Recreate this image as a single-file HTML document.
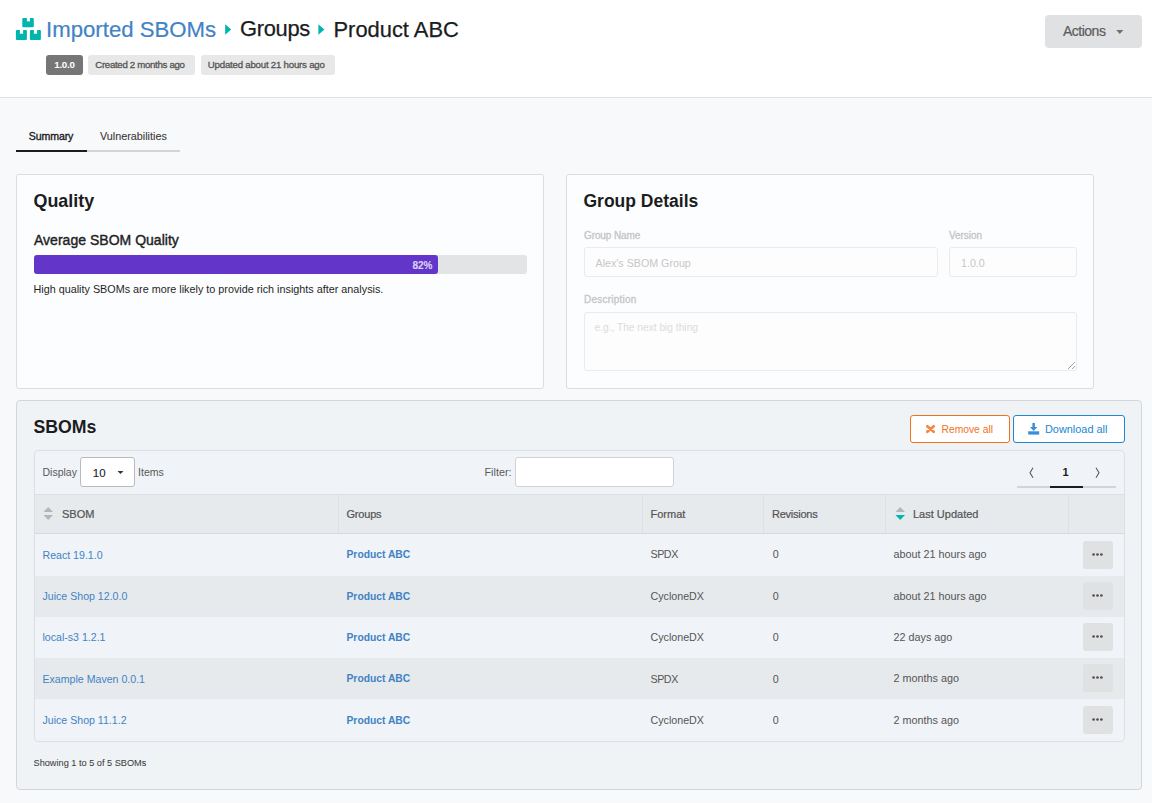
<!DOCTYPE html>
<html><head><meta charset="utf-8"><title>Product ABC</title>
<style>
html,body{margin:0;padding:0;width:1152px;height:803px;overflow:hidden;background:#f8f9fb;}
body{position:relative;font-family:"Liberation Sans", sans-serif;}
.a{position:absolute;}
.t{white-space:nowrap;}
</style></head><body>
<div class="a" style="left:0px;top:0px;width:1152px;height:97px;background:#ffffff;"></div>
<div class="a" style="left:0px;top:97px;width:1152px;height:1px;background:#dfe3e8;"></div>
<svg class="a" style="left:0;top:0" width="60" height="50" viewBox="0 0 60 50">
<g fill="#00b5ad">
<path d="M23.7 18h3.2v3.6l1.55-0.4 1.55 0.4V18h2.9q0.9 0 0.9 1v7.2q0 1-1 1h-9.5q-1 0-1-1V19q0-1 1-1z"/>
<path d="M16.9 30h3v4l1.6-0.5 1.6 0.5v-4h2.9q0.9 0 0.9 1v8q0 1-1 1h-9q-1 0-1-1v-8q0-1 1-1z"/>
<path d="M30.9 30h3v4l1.6-0.5 1.6 0.5v-4h2.9q0.9 0 0.9 1v8q0 1-1 1h-9q-1 0-1-1v-8q0-1 1-1z"/>
</g></svg>
<div class="a t" style="left:46px;top:18.70px;font-size:22.2px;line-height:22.2px;font-weight:400;color:#4183c4;-webkit-text-stroke:0.2px #4183c4;">Imported SBOMs</div>
<svg class="a" style="left:224px;top:23px" width="10" height="13"><path d="M1.2 1.3L7.2 6.5L1.2 11.7Z" fill="#00b5ad"/></svg>
<div class="a t" style="left:240px;top:18.15px;font-size:21.9px;line-height:21.9px;font-weight:400;color:#1b1c1d;letter-spacing:-0.3px;-webkit-text-stroke:0.25px #1b1c1d;">Groups</div>
<svg class="a" style="left:317px;top:23px" width="10" height="13"><path d="M1.4 1.3L7.4 6.5L1.4 11.7Z" fill="#00b5ad"/></svg>
<div class="a t" style="left:333.5px;top:18.85px;font-size:21.9px;line-height:21.9px;font-weight:400;color:#1b1c1d;-webkit-text-stroke:0.25px #1b1c1d;">Product ABC</div>
<div class="a" style="left:46px;top:55px;width:37px;height:20px;background:#767676;border-radius:3px;"></div>
<div class="a t" style="left:54.3px;top:59.60px;font-size:9.8px;line-height:9.8px;font-weight:700;color:#ffffff;letter-spacing:-0.3px;">1.0.0</div>
<div class="a" style="left:88px;top:55px;width:106.5px;height:20px;background:#e8e8e8;border-radius:3px;"></div>
<div class="a t" style="left:95.3px;top:59.95px;font-size:9.7px;line-height:9.7px;font-weight:400;color:#555;letter-spacing:-0.33px;-webkit-text-stroke:0.3px #555;">Created 2 months ago</div>
<div class="a" style="left:200.5px;top:55px;width:134.0px;height:20px;background:#e8e8e8;border-radius:3px;"></div>
<div class="a t" style="left:207.8px;top:59.95px;font-size:9.7px;line-height:9.7px;font-weight:400;color:#555;letter-spacing:-0.23px;-webkit-text-stroke:0.3px #555;">Updated about 21 hours ago</div>
<div class="a" style="left:1045px;top:15px;width:97px;height:33px;background:#e0e1e2;border-radius:4px;"></div>
<div class="a t" style="left:1063px;top:24.00px;font-size:14px;line-height:14px;font-weight:400;color:#5b5b5b;letter-spacing:-0.5px;-webkit-text-stroke:0.2px #5b5b5b;">Actions</div>
<svg class="a" style="left:1115px;top:29px" width="10" height="7"><path d="M1.3 1L8.3 1L4.8 5Z" fill="#6e6e6e"/></svg>
<div class="a" style="left:0px;top:98px;width:1152px;height:705px;background:#f8f9fb;"></div>
<div class="a t" style="left:28.7px;top:131.20px;font-size:10.6px;line-height:10.6px;font-weight:400;color:#1b1c1d;letter-spacing:-0.1px;-webkit-text-stroke:0.35px #1b1c1d;">Summary</div>
<div class="a t" style="left:100px;top:130.60px;font-size:10.8px;line-height:10.8px;font-weight:400;color:#3a3a3a;-webkit-text-stroke:0.1px #3a3a3a;">Vulnerabilities</div>
<div class="a" style="left:16px;top:150px;width:71px;height:2px;background:#1b1c1d;"></div>
<div class="a" style="left:87px;top:150px;width:93px;height:2px;background:#d4d4d5;"></div>
<div class="a" style="left:16px;top:174px;width:528px;height:215px;background:#fcfdfe;box-sizing:border-box;border:1px solid #dcdde0;border-radius:3px;"></div>
<div class="a t" style="left:33.5px;top:192.65px;font-size:17.9px;line-height:17.9px;font-weight:700;color:#1b1c1d;">Quality</div>
<div class="a t" style="left:34px;top:232.50px;font-size:14px;line-height:14px;font-weight:400;color:#222;letter-spacing:0.02px;-webkit-text-stroke:0.4px #222;">Average SBOM Quality</div>
<div class="a" style="left:34px;top:255px;width:493px;height:19px;background:#e3e4e6;border-radius:3px;"></div>
<div class="a" style="left:34px;top:255px;width:404px;height:19px;background:#6435c9;border-radius:3px;"></div>
<div class="a t" style="left:412.5px;top:261.00px;font-size:10px;line-height:10px;font-weight:700;color:#d9cff3;-webkit-text-stroke:0.15px #d9cff3;">82%</div>
<div class="a t" style="left:33.5px;top:284.00px;font-size:10.8px;line-height:10.8px;font-weight:400;color:#1f1f1f;">High quality SBOMs are more likely to provide rich insights after analysis.</div>
<div class="a" style="left:566px;top:174px;width:528px;height:215px;background:#fcfdfe;box-sizing:border-box;border:1px solid #dcdde0;border-radius:3px;"></div>
<div class="a t" style="left:583.5px;top:192.85px;font-size:17.5px;line-height:17.5px;font-weight:700;color:#1b1c1d;">Group Details</div>
<div class="a t" style="left:584px;top:230.80px;font-size:10px;line-height:10px;font-weight:400;color:#c4c5c7;letter-spacing:-0.1px;-webkit-text-stroke:0.3px #c4c5c7;">Group Name</div>
<div class="a t" style="left:949px;top:231.00px;font-size:10px;line-height:10px;font-weight:400;color:#c4c5c7;letter-spacing:-0.05px;-webkit-text-stroke:0.3px #c4c5c7;">Version</div>
<div class="a" style="left:584px;top:247px;width:354px;height:30px;background:#fdfdfe;box-sizing:border-box;border:1px solid #ebebec;border-radius:3px;"></div>
<div class="a" style="left:949px;top:247px;width:128px;height:30px;background:#fdfdfe;box-sizing:border-box;border:1px solid #ebebec;border-radius:3px;"></div>
<div class="a t" style="left:595.5px;top:257.95px;font-size:10.7px;line-height:10.7px;font-weight:400;color:#c5c6c8;">Alex's SBOM Group</div>
<div class="a t" style="left:961px;top:257.95px;font-size:10.7px;line-height:10.7px;font-weight:400;color:#c5c6c8;">1.0.0</div>
<div class="a t" style="left:584px;top:294.80px;font-size:10px;line-height:10px;font-weight:400;color:#c4c5c7;letter-spacing:0.22px;-webkit-text-stroke:0.3px #c4c5c7;">Description</div>
<div class="a" style="left:584px;top:312px;width:493px;height:59px;background:#fdfdfe;box-sizing:border-box;border:1px solid #ebebec;border-radius:3px;"></div>
<div class="a t" style="left:594.5px;top:322.90px;font-size:10.2px;line-height:10.2px;font-weight:400;color:#dcdcdd;">e.g., The next big thing</div>
<svg class="a" style="left:1066px;top:360px" width="10" height="10"><path d="M9 2L2 9M9 6L6 9" stroke="#9a9a9a" stroke-width="0.9"/></svg>
<div class="a" style="left:16px;top:400px;width:1126px;height:390px;background:#f0f3f6;box-sizing:border-box;border:1px solid #d4d6d9;border-radius:4px;"></div>
<div class="a t" style="left:33.5px;top:419.15px;font-size:17.7px;line-height:17.7px;font-weight:700;color:#1b1c1d;">SBOMs</div>
<div class="a" style="left:910px;top:415px;width:100px;height:28px;background:#ffffff;box-sizing:border-box;border:1px solid #f2711c;border-radius:3px;"></div>
<svg class="a" style="left:924px;top:423px" width="13" height="12"><path d="M3.3 3.2L9.7 8.8M9.7 3.2L3.3 8.8" stroke="#f4853f" stroke-width="2.6" stroke-linecap="round"/></svg>
<div class="a t" style="left:941.5px;top:424.55px;font-size:10.3px;line-height:10.3px;font-weight:400;color:#f2711c;">Remove all</div>
<div class="a" style="left:1013px;top:415px;width:112px;height:28px;background:#ffffff;box-sizing:border-box;border:1px solid #2185d0;border-radius:3px;"></div>
<svg class="a" style="left:1027px;top:421px" width="14" height="15"><g fill="#3a8fd6"><path d="M5.4 2h2.5v4h2.4L6.65 9.9 3 6h2.4z"/><path d="M1.2 10.3h11v3.3h-11z"/></g></svg>
<div class="a t" style="left:1045px;top:423.75px;font-size:10.9px;line-height:10.9px;font-weight:400;color:#2185d0;">Download all</div>
<div class="a" style="left:34px;top:450px;width:1091px;height:291.5px;background:#f0f3f7;box-sizing:border-box;border:1px solid #dcdfe3;border-radius:4px;"></div>
<div class="a t" style="left:42.5px;top:467.05px;font-size:10.5px;line-height:10.5px;font-weight:400;color:#5a5a5a;">Display</div>
<div class="a" style="left:80px;top:457px;width:55px;height:30px;background:#ffffff;box-sizing:border-box;border:1px solid #b8babd;border-radius:3px;"></div>
<div class="a t" style="left:92.8px;top:467.85px;font-size:11.5px;line-height:11.5px;font-weight:400;color:#1b1c1d;-webkit-text-stroke:0.1px #1b1c1d;">10</div>
<svg class="a" style="left:116px;top:470px" width="9" height="6"><path d="M1.5 1L7.5 1L4.5 4Z" fill="#333"/></svg>
<div class="a t" style="left:138px;top:467.00px;font-size:10.6px;line-height:10.6px;font-weight:400;color:#5a5a5a;">Items</div>
<div class="a t" style="left:484.5px;top:466.90px;font-size:10.8px;line-height:10.8px;font-weight:400;color:#5a5a5a;">Filter:</div>
<div class="a" style="left:515px;top:457px;width:159px;height:30px;background:#ffffff;box-sizing:border-box;border:1px solid #d0d2d6;border-radius:3px;"></div>
<svg class="a" style="left:1027px;top:466px" width="10" height="14"><path d="M6 1.8L3 6.8L6 11.8" fill="none" stroke="#555" stroke-width="1.05"/></svg>
<div class="a t" style="left:1062.5px;top:467.00px;font-size:11px;line-height:11px;font-weight:700;color:#1b1c1d;">1</div>
<svg class="a" style="left:1093px;top:466px" width="10" height="14"><path d="M3 1.8L6 6.8L3 11.8" fill="none" stroke="#555" stroke-width="1.05"/></svg>
<div class="a" style="left:1017px;top:486px;width:99px;height:2px;background:#d4d4d5;"></div>
<div class="a" style="left:1050px;top:486px;width:33px;height:2px;background:#1b1c1d;"></div>
<div class="a" style="left:35px;top:494px;width:1089px;height:39px;background:#e7eaed;"></div>
<div class="a" style="left:35px;top:494px;width:1089px;height:1px;background:#dde0e4;"></div>
<div class="a" style="left:35px;top:533px;width:1089px;height:1px;background:#d6d9dd;"></div>
<div class="a" style="left:338px;top:494px;width:1px;height:39px;background:#dde0e4;"></div>
<div class="a" style="left:642px;top:494px;width:1px;height:39px;background:#dde0e4;"></div>
<div class="a" style="left:763px;top:494px;width:1px;height:39px;background:#dde0e4;"></div>
<div class="a" style="left:885px;top:494px;width:1px;height:39px;background:#dde0e4;"></div>
<div class="a" style="left:1068px;top:494px;width:1px;height:39px;background:#dde0e4;"></div>
<svg class="a" style="left:43px;top:506px" width="11" height="15"><path d="M5.2 1L10 6H0.5z M5.2 14L10 9H0.5z" fill="#b4b5b7"/></svg>
<div class="a t" style="left:62px;top:508.50px;font-size:11px;line-height:11px;font-weight:400;color:#555;-webkit-text-stroke:0.22px #555;">SBOM</div>
<div class="a t" style="left:346.5px;top:508.50px;font-size:11px;line-height:11px;font-weight:400;color:#555;letter-spacing:-0.2px;-webkit-text-stroke:0.22px #555;">Groups</div>
<div class="a t" style="left:650.5px;top:508.50px;font-size:11px;line-height:11px;font-weight:400;color:#555;-webkit-text-stroke:0.22px #555;">Format</div>
<div class="a t" style="left:772px;top:508.50px;font-size:11px;line-height:11px;font-weight:400;color:#555;letter-spacing:-0.25px;-webkit-text-stroke:0.22px #555;">Revisions</div>
<svg class="a" style="left:895px;top:506px" width="11" height="15"><path d="M5.2 1L10 6H0.5z" fill="#b4b5b7"/><path d="M5.2 14L10 9H0.5z" fill="#00b5ad"/></svg>
<div class="a t" style="left:913px;top:508.50px;font-size:11px;line-height:11px;font-weight:400;color:#555;-webkit-text-stroke:0.22px #555;">Last Updated</div>
<div class="a t" style="left:42.5px;top:549.50px;font-size:10.6px;line-height:10.6px;font-weight:400;color:#4183c4;">React 19.1.0</div>
<div class="a t" style="left:346.5px;top:550.15px;font-size:10.3px;line-height:10.3px;font-weight:700;color:#4183c4;">Product ABC</div>
<div class="a t" style="left:650.5px;top:549.45px;font-size:10.7px;line-height:10.7px;font-weight:400;color:#555;letter-spacing:-0.45px;">SPDX</div>
<div class="a t" style="left:772.8px;top:549.45px;font-size:10.7px;line-height:10.7px;font-weight:400;color:#555;">0</div>
<div class="a t" style="left:893.5px;top:549.40px;font-size:10.8px;line-height:10.8px;font-weight:400;color:#555;">about 21 hours ago</div>
<div class="a" style="left:1083px;top:540.75px;width:30px;height:28.0px;background:#e0e1e2;border-radius:3px;"></div>
<svg class="a" style="left:1092px;top:551.75px" width="12" height="5"><g fill="#505050"><circle cx="1.6" cy="2.5" r="1.35"/><circle cx="5.5" cy="2.5" r="1.35"/><circle cx="9.4" cy="2.5" r="1.35"/></g></svg>
<div class="a" style="left:35px;top:575.5px;width:1089px;height:41.0px;background:#e7eaed;"></div>
<div class="a t" style="left:42.5px;top:590.85px;font-size:10.6px;line-height:10.6px;font-weight:400;color:#4183c4;">Juice Shop 12.0.0</div>
<div class="a t" style="left:346.5px;top:591.50px;font-size:10.3px;line-height:10.3px;font-weight:700;color:#4183c4;">Product ABC</div>
<div class="a t" style="left:650.5px;top:590.80px;font-size:10.7px;line-height:10.7px;font-weight:400;color:#555;">CycloneDX</div>
<div class="a t" style="left:772.8px;top:590.80px;font-size:10.7px;line-height:10.7px;font-weight:400;color:#555;">0</div>
<div class="a t" style="left:893.5px;top:590.75px;font-size:10.8px;line-height:10.8px;font-weight:400;color:#555;">about 21 hours ago</div>
<div class="a" style="left:1083px;top:582.0px;width:30px;height:28.0px;background:#e0e1e2;border-radius:3px;"></div>
<svg class="a" style="left:1092px;top:593.0px" width="12" height="5"><g fill="#505050"><circle cx="1.6" cy="2.5" r="1.35"/><circle cx="5.5" cy="2.5" r="1.35"/><circle cx="9.4" cy="2.5" r="1.35"/></g></svg>
<div class="a t" style="left:42.5px;top:632.20px;font-size:10.6px;line-height:10.6px;font-weight:400;color:#4183c4;">local-s3 1.2.1</div>
<div class="a t" style="left:346.5px;top:632.85px;font-size:10.3px;line-height:10.3px;font-weight:700;color:#4183c4;">Product ABC</div>
<div class="a t" style="left:650.5px;top:632.15px;font-size:10.7px;line-height:10.7px;font-weight:400;color:#555;">CycloneDX</div>
<div class="a t" style="left:772.8px;top:632.15px;font-size:10.7px;line-height:10.7px;font-weight:400;color:#555;">0</div>
<div class="a t" style="left:893.5px;top:632.10px;font-size:10.8px;line-height:10.8px;font-weight:400;color:#555;">22 days ago</div>
<div class="a" style="left:1083px;top:623.0px;width:30px;height:28.0px;background:#e0e1e2;border-radius:3px;"></div>
<svg class="a" style="left:1092px;top:634.0px" width="12" height="5"><g fill="#505050"><circle cx="1.6" cy="2.5" r="1.35"/><circle cx="5.5" cy="2.5" r="1.35"/><circle cx="9.4" cy="2.5" r="1.35"/></g></svg>
<div class="a" style="left:35px;top:657.5px;width:1089px;height:41.5px;background:#e7eaed;"></div>
<div class="a t" style="left:42.5px;top:673.55px;font-size:10.6px;line-height:10.6px;font-weight:400;color:#4183c4;">Example Maven 0.0.1</div>
<div class="a t" style="left:346.5px;top:674.20px;font-size:10.3px;line-height:10.3px;font-weight:700;color:#4183c4;">Product ABC</div>
<div class="a t" style="left:650.5px;top:673.50px;font-size:10.7px;line-height:10.7px;font-weight:400;color:#555;letter-spacing:-0.45px;">SPDX</div>
<div class="a t" style="left:772.8px;top:673.50px;font-size:10.7px;line-height:10.7px;font-weight:400;color:#555;">0</div>
<div class="a t" style="left:893.5px;top:673.45px;font-size:10.8px;line-height:10.8px;font-weight:400;color:#555;">2 months ago</div>
<div class="a" style="left:1083px;top:664.25px;width:30px;height:28.0px;background:#e0e1e2;border-radius:3px;"></div>
<svg class="a" style="left:1092px;top:675.25px" width="12" height="5"><g fill="#505050"><circle cx="1.6" cy="2.5" r="1.35"/><circle cx="5.5" cy="2.5" r="1.35"/><circle cx="9.4" cy="2.5" r="1.35"/></g></svg>
<div class="a t" style="left:42.5px;top:714.90px;font-size:10.6px;line-height:10.6px;font-weight:400;color:#4183c4;">Juice Shop 11.1.2</div>
<div class="a t" style="left:346.5px;top:715.55px;font-size:10.3px;line-height:10.3px;font-weight:700;color:#4183c4;">Product ABC</div>
<div class="a t" style="left:650.5px;top:714.85px;font-size:10.7px;line-height:10.7px;font-weight:400;color:#555;">CycloneDX</div>
<div class="a t" style="left:772.8px;top:714.85px;font-size:10.7px;line-height:10.7px;font-weight:400;color:#555;">0</div>
<div class="a t" style="left:893.5px;top:714.80px;font-size:10.8px;line-height:10.8px;font-weight:400;color:#555;">2 months ago</div>
<div class="a" style="left:1083px;top:706.0px;width:30px;height:28.0px;background:#e0e1e2;border-radius:3px;"></div>
<svg class="a" style="left:1092px;top:717.0px" width="12" height="5"><g fill="#505050"><circle cx="1.6" cy="2.5" r="1.35"/><circle cx="5.5" cy="2.5" r="1.35"/><circle cx="9.4" cy="2.5" r="1.35"/></g></svg>
<div class="a t" style="left:33.5px;top:759.40px;font-size:9.2px;line-height:9.2px;font-weight:400;color:#3c3c3c;-webkit-text-stroke:0.05px #3c3c3c;">Showing 1 to 5 of 5 SBOMs</div>
</body></html>
